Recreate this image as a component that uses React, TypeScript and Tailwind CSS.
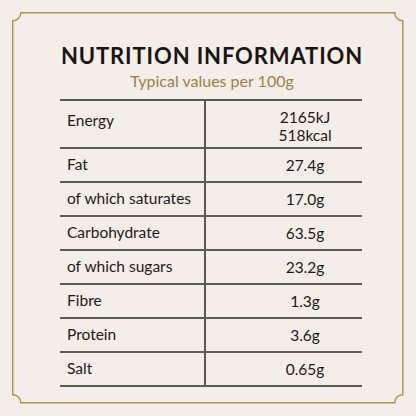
const rows: { label: string; value: string[] }[] = [
  { label: "Energy", value: ["2165kJ", "518kcal"] },
  { label: "Fat", value: ["27.4g"] },
  { label: "of which saturates", value: ["17.0g"] },
  { label: "Carbohydrate", value: ["63.5g"] },
  { label: "of which sugars", value: ["23.2g"] },
  { label: "Fibre", value: ["1.3g"] },
  { label: "Protein", value: ["3.6g"] },
  { label: "Salt", value: ["0.65g"] },
];

function Frame() {
  const r = 8;
  const a = 12.75;
  const b = 402.75;
  return (
    <svg className="pointer-events-none absolute inset-0" width="416" height="416" viewBox="0 0 416 416">
      <path
        d={`M ${a + r} ${a} H ${b - r} A ${r} ${r} 0 0 0 ${b} ${a + r} V ${b - r} A ${r} ${r} 0 0 0 ${b - r} ${b} H ${a + r} A ${r} ${r} 0 0 0 ${a} ${b - r} V ${a + r} A ${r} ${r} 0 0 0 ${a + r} ${a} Z`}
        fill="none"
        stroke="#b8904f"
        strokeWidth="1.5"
      />
    </svg>
  );
}

export default function App() {
  return (
    <div
      className="relative h-[416px] w-[416px] overflow-hidden bg-[#f3eee8] text-[#1e1a18]"
      style={{ fontFamily: "Lato, 'Noto Sans', sans-serif" }}
    >
      <Frame />
      <div className="flex flex-col items-center pl-[8px] pt-[42px]">
        <h1 className="text-[22px] font-bold leading-[28px] tracking-[0.04em] text-[#1b1412]">
          NUTRITION INFORMATION
        </h1>
        <p className="mt-[1px] text-[16px] leading-[20px] text-[#a27d47]">Typical values per 100g</p>
      </div>

      <div className="ml-[60px] mt-[8px] w-[302px] border-t-2 border-[#5a5858]">
        {rows.map((row, i) => (
          <div
            key={row.label}
            className={`grid grid-cols-[146px_1fr] border-b-2 border-[#5e5c5b] ${i === 0 ? "h-[48px]" : "h-[34px]"}`}
          >
            <div
              className={`flex border-r-2 border-[#5a5858] pl-[7px] text-[15.5px] ${
                i === 0 ? "items-start pt-[8px]" : "items-center"
              }`}
            >
              {row.label}
            </div>
            <div
              className={`flex flex-col pl-[42px] text-center text-[15.5px] leading-[18px] ${
                i === 0 ? "justify-start pt-[7px]" : "justify-center"
              }`}
            >
              {row.value.map((v) => (
                <span key={v}>{v}</span>
              ))}
            </div>
          </div>
        ))}
      </div>
    </div>
  );
}
